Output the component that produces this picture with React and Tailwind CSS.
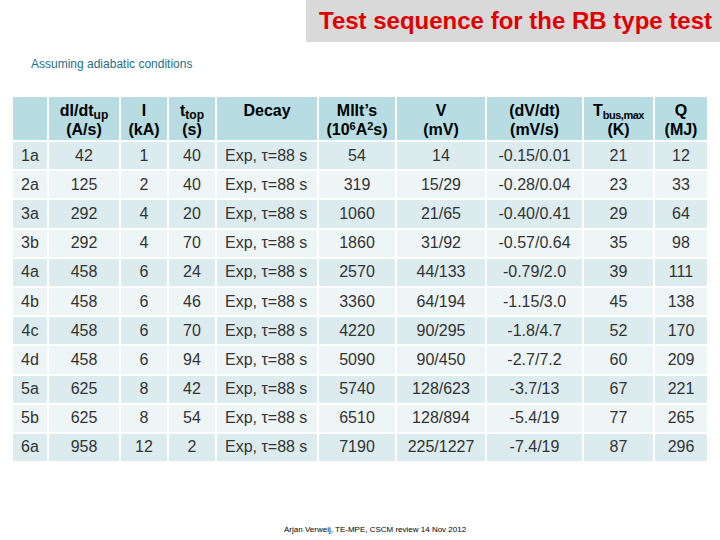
const rows = [
  ['1a', '42', '1', '40', '54', '14', '-0.15/0.01', '21', '12'],
  ['2a', '125', '2', '40', '319', '15/29', '-0.28/0.04', '23', '33'],
  ['3a', '292', '4', '20', '1060', '21/65', '-0.40/0.41', '29', '64'],
  ['3b', '292', '4', '70', '1860', '31/92', '-0.57/0.64', '35', '98'],
  ['4a', '458', '6', '24', '2570', '44/133', '-0.79/2.0', '39', '111'],
  ['4b', '458', '6', '46', '3360', '64/194', '-1.15/3.0', '45', '138'],
  ['4c', '458', '6', '70', '4220', '90/295', '-1.8/4.7', '52', '170'],
  ['4d', '458', '6', '94', '5090', '90/450', '-2.7/7.2', '60', '209'],
  ['5a', '625', '8', '42', '5740', '128/623', '-3.7/13', '67', '221'],
  ['5b', '625', '8', '54', '6510', '128/894', '-5.4/19', '77', '265'],
  ['6a', '958', '12', '2', '7190', '225/1227', '-7.4/19', '87', '296'],
]

function Head({ children }) {
  return (
    <div className="bg-[#b7dde3] pt-[4px] text-center text-[16px] font-bold leading-[19px] text-black">
      {children}
    </div>
  )
}

function Cell({ children, shade, left }) {
  const bg = shade ? 'bg-[#dbebee]' : 'bg-[#eef5f7]'
  return (
    <div className={`${bg} flex items-center ${left ? 'justify-start pl-[8px]' : 'justify-center'} text-[16px] text-[#333]`}>
      {children}
    </div>
  )
}

export default function App() {
  return (
    <div className="flex h-[540px] w-[720px] flex-col bg-white font-['Liberation_Sans',Arial,sans-serif]">
      <div className="flex justify-end">
        <div className="flex h-[42px] w-[414px] items-center justify-end bg-[#d9d9d9] pr-[8px]">
          <h1 className="text-[24px] font-bold text-[#e00000]">Test sequence for the RB type test</h1>
        </div>
      </div>

      <p className="ml-[31px] mt-[13px] text-[12px] text-[#1f6e86]">Assuming adiabatic conditions</p>

      <div className="ml-[13px] mt-[24px] grid grid-cols-[34px_70px_46px_46px_100px_76px_88px_95px_69px_52px] grid-rows-[43px] auto-rows-[27.2px] gap-[2px]">
        <Head />
        <Head>
          dI/dt<sub className="text-[12px]">up</sub>
          <br />(A/s)
        </Head>
        <Head>
          I<br />(kA)
        </Head>
        <Head>
          t<sub className="text-[12px]">top</sub>
          <br />(s)
        </Head>
        <Head>Decay</Head>
        <Head>
          MIIt’s
          <br />(10<sup className="text-[11px]">6</sup>A<sup className="text-[11px]">2</sup>s)
        </Head>
        <Head>
          V<br />(mV)
        </Head>
        <Head>
          (dV/dt)
          <br />(mV/s)
        </Head>
        <Head>
          T<sub className="text-[11px] tracking-[-0.5px]">bus,max</sub>
          <br />(K)
        </Head>
        <Head>
          Q<br />(MJ)
        </Head>

        {rows.map((r, i) => {
          const shade = i % 2 === 0
          return [
            <Cell key={`${r[0]}-0`} shade={shade}>{r[0]}</Cell>,
            <Cell key={`${r[0]}-1`} shade={shade}>{r[1]}</Cell>,
            <Cell key={`${r[0]}-2`} shade={shade}>{r[2]}</Cell>,
            <Cell key={`${r[0]}-3`} shade={shade}>{r[3]}</Cell>,
            <Cell key={`${r[0]}-d`} shade={shade} left>Exp, τ=88 s</Cell>,
            <Cell key={`${r[0]}-4`} shade={shade}>{r[4]}</Cell>,
            <Cell key={`${r[0]}-5`} shade={shade}>{r[5]}</Cell>,
            <Cell key={`${r[0]}-6`} shade={shade}>{r[6]}</Cell>,
            <Cell key={`${r[0]}-7`} shade={shade}>{r[7]}</Cell>,
            <Cell key={`${r[0]}-8`} shade={shade}>{r[8]}</Cell>,
          ]
        })}
      </div>

      <p className="mb-[4px] ml-[284px] mt-auto text-[8px] text-black">
        Arjan Verweij, TE-MPE, CSCM review 14 Nov 2012
      </p>
    </div>
  )
}
